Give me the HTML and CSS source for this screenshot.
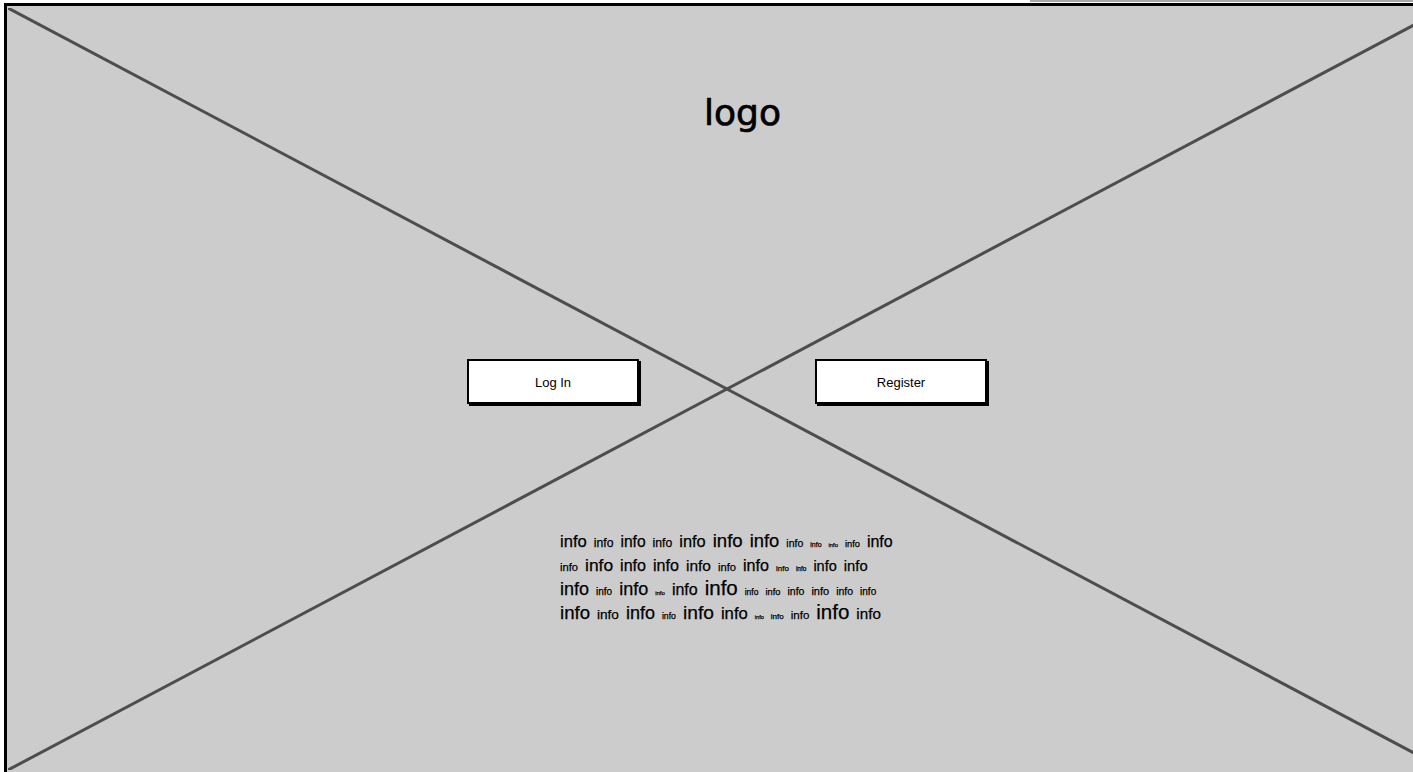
FILE: index.html
```html
<!DOCTYPE html>
<html lang="en">
<head>
<meta charset="utf-8">
<title>Wireframe</title>
<link rel="stylesheet" href="styles.css">
</head>
<body>
<div class="topstrip"><div class="topbar"></div></div>
<div class="canvas">
  <span class="handle handle-top"></span>
  <span class="handle handle-left"></span>
  <div class="stage">
    <svg class="cross" width="1438" height="762" viewBox="0 0 1438 762" aria-hidden="true">
      <line x1="0" y1="0" x2="1438" y2="762"/>
      <line x1="0" y1="762" x2="1438" y2="0"/>
    </svg>
    <div class="logo">logo</div>
    <div class="actions">
      <button class="btn">Log In</button>
      <button class="btn">Register</button>
    </div>
    <div class="info">
      <div class="line"><span class="w" style="font-size:16.6px">info</span><span class="w" style="font-size:12.2px">info</span><span class="w" style="font-size:15.6px">info</span><span class="w" style="font-size:12.2px">info</span><span class="w" style="font-size:16.4px">info</span><span class="w" style="font-size:18.6px">info</span><span class="w" style="font-size:18.4px">info</span><span class="w" style="font-size:10.5px">info</span><span class="w" style="font-size:7px">info</span><span class="w" style="font-size:5.8px">info</span><span class="w" style="font-size:9.3px">info</span><span class="w" style="font-size:16px">info</span></div>
      <div class="line"><span class="w" style="font-size:11.2px">info</span><span class="w" style="font-size:17.4px">info</span><span class="w" style="font-size:16.1px">info</span><span class="w" style="font-size:16.1px">info</span><span class="w" style="font-size:15.5px">info</span><span class="w" style="font-size:11.2px">info</span><span class="w" style="font-size:16.1px">info</span><span class="w" style="font-size:8px">info</span><span class="w" style="font-size:6.5px">info</span><span class="w" style="font-size:14.5px">info</span><span class="w" style="font-size:14.8px">info</span></div>
      <div class="line"><span class="w" style="font-size:18px">info</span><span class="w" style="font-size:10px">info</span><span class="w" style="font-size:18px">info</span><span class="w" style="font-size:6px">info</span><span class="w" style="font-size:16px">info</span><span class="w" style="font-size:20.5px">info</span><span class="w" style="font-size:8.5px">info</span><span class="w" style="font-size:9.3px">info</span><span class="w" style="font-size:10.5px">info</span><span class="w" style="font-size:11px">info</span><span class="w" style="font-size:10.5px">info</span><span class="w" style="font-size:10px">info</span></div>
      <div class="line"><span class="w" style="font-size:18.6px">info</span><span class="w" style="font-size:13.6px">info</span><span class="w" style="font-size:18px">info</span><span class="w" style="font-size:8.7px">info</span><span class="w" style="font-size:19.2px">info</span><span class="w" style="font-size:16.7px">info</span><span class="w" style="font-size:5.6px">info</span><span class="w" style="font-size:8px">info</span><span class="w" style="font-size:11.5px">info</span><span class="w" style="font-size:20.5px">info</span><span class="w" style="font-size:15.2px">info</span></div>
    </div>
  </div>
</div>
</body>
</html>
```
FILE: styles.css
```css
html, body {
  margin: 0;
  padding: 0;
  height: 100%;
  overflow: hidden;
  background: #ffffff;
}

body {
  font-family: "Liberation Sans", Arial, sans-serif;
  color: #000;
}

.topstrip {
  height: 3px;
  display: flex;
  justify-content: flex-end;
}

.topbar {
  width: 383px;
  height: 2px;
  background: #a8a8a8;
}

.canvas {
  position: relative;
  margin-left: 4px;
  width: 1406px;
  height: 766px;
  border-top: 3px solid #000;
  border-left: 3px solid #000;
  background: #cccccc;
  overflow: hidden;
}

.handle {
  position: absolute;
  width: 4px;
  height: 3px;
  background: #ffffff;
  z-index: 2;
}

.handle-top {
  left: 719px;
  top: -3px;
}

.handle-left {
  left: -3px;
  top: 382px;
  width: 3px;
  height: 4px;
}

.stage {
  position: relative;
  width: 1438px;
  height: 762px;
  margin: 2px 0 0 1px;
  padding-top: 87px;
  box-sizing: border-box;
  display: flex;
  flex-direction: column;
  align-items: center;
}

.cross {
  position: absolute;
  left: 0;
  top: 0;
}

.cross line {
  stroke: #4d4d4d;
  stroke-width: 3;
}

.logo {
  position: relative;
  font-family: "DejaVu Sans", "Liberation Sans", sans-serif;
  font-size: 36px;
  line-height: 1;
  margin-left: 31px;
  -webkit-text-stroke: 0.7px #000;
}

.actions {
  position: relative;
  margin-top: 228px;
  display: flex;
  gap: 176px;
}

.btn {
  width: 172px;
  height: 45px;
  box-sizing: border-box;
  border: 2px solid #000;
  background: #ffffff;
  box-shadow: 2px 2px 0 #000;
  font-family: "Liberation Sans", Arial, sans-serif;
  font-size: 13px;
  color: #000;
  padding: 1px 0 0;
  display: flex;
  align-items: center;
  justify-content: center;
}

.info {
  position: relative;
  margin-top: 131px;
  width: 334px;
  -webkit-text-stroke: 0.25px #000;
}

.line {
  font-size: 0;
  line-height: 24px;
  height: 24px;
  white-space: nowrap;
}

.w {
  line-height: 0;
  margin-right: 7px;
}
```
